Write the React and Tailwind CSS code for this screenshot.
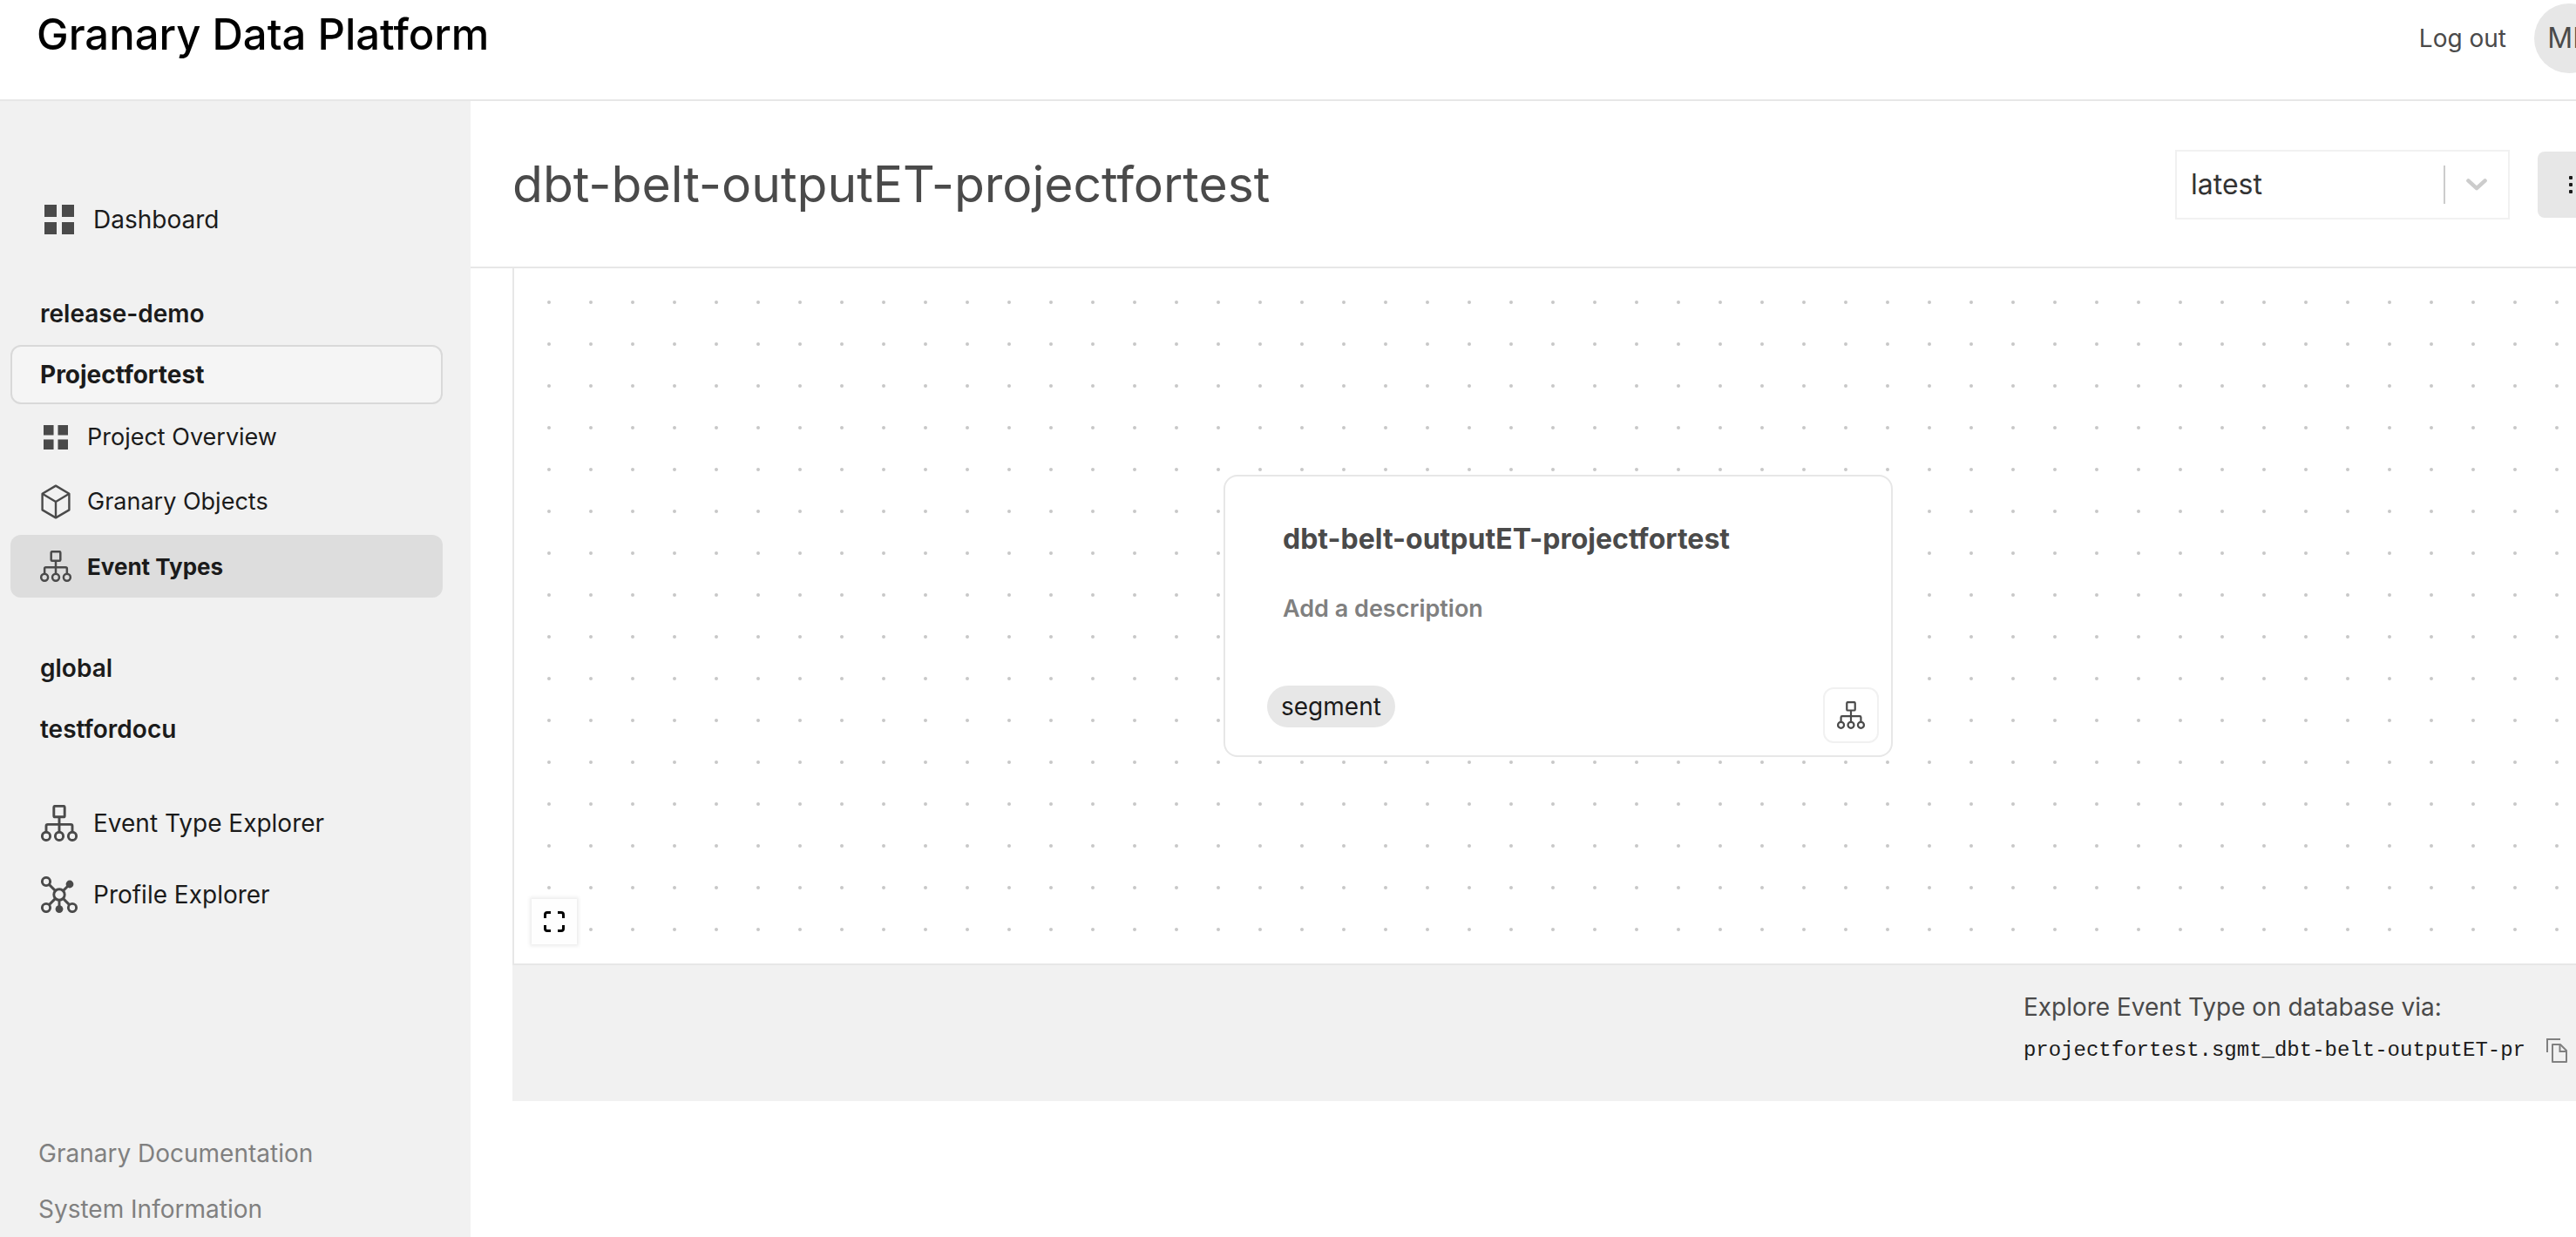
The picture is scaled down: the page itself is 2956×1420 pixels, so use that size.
import React from "react";

function GridIcon({ className }) {
  return (
    <svg viewBox="0 0 34 34" fill="currentColor" className={className} aria-hidden="true">
      <rect x="0" y="0" width="14" height="14" />
      <rect x="20" y="0" width="14" height="14" />
      <rect x="0" y="20" width="14" height="14" />
      <rect x="20" y="20" width="14" height="14" />
    </svg>
  );
}

function CubeIcon({ className }) {
  return (
    <svg viewBox="0 0 34 40" fill="none" stroke="currentColor" strokeWidth="2.4" strokeLinejoin="round" className={className} aria-hidden="true">
      <path d="M17 1.6 32.4 10.8V29.4L17 38.4 1.6 29.4V10.8Z" />
      <path d="M1.6 10.8 17 20 32.4 10.8M17 20V38.4" />
    </svg>
  );
}

function HierarchyIcon({ className }) {
  return (
    <svg viewBox="0 0 42 42" fill="none" stroke="currentColor" strokeWidth="2.9" className={className} aria-hidden="true">
      <rect x="14.8" y="1.4" width="12.4" height="12.4" rx="1.4" />
      <path d="M21 13.8V31M6 31V24.2Q6 22.4 7.8 22.4H34.2Q36 22.4 36 24.2V31" />
      <circle cx="6" cy="35.9" r="4.6" />
      <circle cx="21" cy="35.9" r="4.6" />
      <circle cx="36" cy="35.9" r="4.6" />
    </svg>
  );
}

function NetworkIcon({ className }) {
  return (
    <svg viewBox="0 0 42 42" fill="none" stroke="currentColor" strokeWidth="2.9" className={className} aria-hidden="true">
      <circle cx="6" cy="6" r="4.6" />
      <circle cx="6" cy="36" r="4.6" />
      <circle cx="36" cy="36" r="4.6" />
      <circle cx="21" cy="21" r="6.2" />
      <path d="M9.4 9.4 16.6 16.6M25.4 16.6 32 10M9.4 32.6 16.6 25.4M25.4 25.4 32.6 32.6M21 27.2V36" />
      <circle cx="33" cy="9" r="4.4" fill="currentColor" stroke="none" />
      <circle cx="21" cy="37.6" r="4.4" fill="currentColor" stroke="none" />
    </svg>
  );
}

function FitIcon({ className }) {
  return (
    <svg viewBox="0 0 24 24" fill="none" stroke="currentColor" strokeWidth="3" className={className} aria-hidden="true">
      <path d="M8 1.5H4Q1.5 1.5 1.5 4V8M16 1.5H20Q22.500 1.5 22.500 4V8M22.500 16V20Q22.500 22.500 20 22.500H16M8 22.500H4Q1.5 22.500 1.5 20V16" />
    </svg>
  );
}

function CopyIcon({ className }) {
  return (
    <svg viewBox="0 0 24 28" fill="none" stroke="currentColor" strokeWidth="2" className={className} aria-hidden="true">
      <path d="M1 16V1H16" />
      <path d="M7 7H16L23 14V27H7Z" strokeLinejoin="round" />
      <path d="M15.500 7V15H23" />
    </svg>
  );
}

function MainLink({ icon, children }) {
  return (
    <a href="#" className="flex h-[82px] items-center gap-[18px] pl-[47px] text-[28px]">
      <span className="flex w-[42px] justify-center text-[#4a4a4a]">{icon}</span>
      {children}
    </a>
  );
}

function SubLink({ icon, active, children }) {
  return (
    <a
      href="#"
      className={
        active
          ? "flex h-[72px] items-center gap-[18px] rounded-xl bg-[#dddddd] pl-[34px] text-[26px] font-bold"
          : "flex h-[72px] items-center gap-[18px] rounded-xl pl-[34px] text-[27px]"
      }
    >
      <span className="flex w-9 justify-center text-[#4a4a4a]">{icon}</span>
      {children}
    </a>
  );
}

function WorkspaceLink({ children }) {
  return (
    <a href="#" className="flex h-[70px] items-center pl-[46px] text-[28px] font-semibold">
      {children}
    </a>
  );
}

function Sidebar() {
  return (
    <aside className="flex w-[540px] shrink-0 flex-col bg-[#f1f1f1] pt-[95px] text-[#1b1b1b]">
      <nav className="flex flex-col">
        <MainLink icon={<GridIcon className="size-[34px]" />}>Dashboard</MainLink>
        <div className="mt-8 flex flex-col">
          <WorkspaceLink>release-demo</WorkspaceLink>
          <div className="mr-8 ml-3 flex flex-col gap-[2px] pt-px">
            <a href="#" className="flex h-[68px] items-center rounded-xl border-2 border-[#d9d9d9] bg-[#f5f5f5] pl-8 text-[28px] font-bold">
              Projectfortest
            </a>
            <SubLink icon={<GridIcon className="size-7" />}>Project Overview</SubLink>
            <SubLink icon={<CubeIcon className="h-10 w-[34px]" />}>Granary Objects</SubLink>
            <SubLink active icon={<HierarchyIcon className="size-9" />}>Event Types</SubLink>
          </div>
        </div>
        <div className="mt-[46px] flex flex-col">
          <WorkspaceLink>global</WorkspaceLink>
          <WorkspaceLink>testfordocu</WorkspaceLink>
        </div>
        <div className="mt-8 flex flex-col">
          <MainLink icon={<HierarchyIcon className="size-[42px]" />}>Event Type Explorer</MainLink>
          <MainLink icon={<NetworkIcon className="size-[42px]" />}>Profile Explorer</MainLink>
        </div>
      </nav>
      <div className="mt-auto flex flex-col pl-11 text-[28px] text-[#808080]">
        <a href="#" className="flex h-16 items-center">Granary Documentation</a>
        <a href="#" className="flex h-16 items-center">System Information</a>
      </div>
    </aside>
  );
}

function VersionSelect() {
  return (
    <div className="relative w-96">
      <select
        aria-label="Version"
        defaultValue="latest"
        className="h-20 w-full appearance-none border-2 border-[#f1f1f1] bg-white pl-4 text-[32px] text-[#333333]"
      >
        <option value="latest">latest</option>
      </select>
      <div className="pointer-events-none absolute inset-y-0 right-0 flex items-center gap-6 pr-[26px] text-[#cccccc]">
        <span className="h-11 w-[2px] bg-[#cccccc]" />
        <svg viewBox="0 0 24 14" fill="none" stroke="currentColor" strokeWidth="4.500" strokeLinecap="round" strokeLinejoin="round" className="h-[14px] w-6" aria-hidden="true">
          <path d="M2.400 2.400 12 11.200 21.600 2.400" />
        </svg>
      </div>
    </div>
  );
}

function EventTypeNode() {
  return (
    <article className="relative flex h-[324px] w-[768px] flex-col rounded-2xl border-2 border-[#e7e7e7] bg-white">
      <h2 className="mt-[52px] ml-[66px] text-[32px] leading-[40px] font-bold text-[#4a4a4a]">
        dbt-belt-outputET-projectfortest
      </h2>
      <button type="button" className="mt-10 ml-[66px] self-start text-[27px] leading-[40px] font-semibold text-[#808080]">
        Add a description
      </button>
      <div className="mt-auto flex items-start justify-between pr-[14px] pb-[14px] pl-12">
        <span className="flex h-12 items-center rounded-full bg-[#e7e7e7] px-4 text-[28px] text-[#1b1b1b]">segment</span>
        <button
          type="button"
          aria-label="Show hierarchy"
          className="mt-[2px] flex size-16 items-center justify-center rounded-xl border-2 border-[#f1f1f1] text-[#4a4a4a]"
        >
          <HierarchyIcon className="size-8" />
        </button>
      </div>
    </article>
  );
}

function Canvas() {
  return (
    <section className="relative flex h-[800px] items-center justify-center border-b-2 border-l-2 border-[#e7e7e7] pr-[2px]">
      <svg className="absolute inset-0 size-full" aria-hidden="true">
        <defs>
          <pattern id="dots" x="16" y="15" width="48" height="48" patternUnits="userSpaceOnUse">
            <circle cx="24" cy="24" r="2" fill="#c8c8c8" />
          </pattern>
        </defs>
        <rect width="100%" height="100%" fill="url(#dots)" />
      </svg>
      <EventTypeNode />
      <button
        type="button"
        aria-label="Fit view"
        className="absolute bottom-[22px] left-5 flex size-[52px] items-center justify-center bg-[#fefefe] text-black shadow-[0_0_4px_2px_rgba(0,0,0,0.08)]"
      >
        <FitIcon className="size-6" />
      </button>
    </section>
  );
}

export default function App() {
  return (
    <div className="min-h-screen overflow-x-hidden bg-white font-['Inter',sans-serif]">
      <div className="-mr-8 flex min-h-screen flex-col">
        <header className="flex h-[116px] items-start justify-between border-b-2 border-[#e7e7e7] pl-[42px]">
          <div className="text-[49px] leading-[80px] font-medium text-black">Granary Data Platform</div>
          <div className="flex items-center gap-8 pt-1 text-[#4a4a4a]">
            <a href="#" className="text-[28px]">Log out</a>
            <span className="flex size-20 items-center justify-center rounded-full bg-[#e7e7e7] text-[32px]">MP</span>
          </div>
        </header>
        <div className="flex flex-1">
          <Sidebar />
          <main className="flex min-w-0 flex-1 flex-col">
            <div className="flex h-48 items-center justify-between border-b-2 border-[#e7e7e7] pt-[2px] pl-12">
              <h1 className="text-[57px] leading-[64px] text-[#4a4a4a]">dbt-belt-outputET-projectfortest</h1>
              <div className="flex items-center gap-8">
                <VersionSelect />
                <button type="button" aria-label="More actions" className="flex size-[76px] flex-col items-center justify-center gap-1 rounded-lg bg-[#e7e7e7]">
                  <span className="size-1 rounded-[1px] bg-[#1b1b1b]" />
                  <span className="size-1 rounded-[1px] bg-[#1b1b1b]" />
                  <span className="size-1 rounded-[1px] bg-[#1b1b1b]" />
                </button>
              </div>
            </div>
            <div className="pl-12">
              <Canvas />
              <footer className="flex h-[156px] justify-end bg-[#f1f1f1] pt-7 pr-[42px]">
                <div className="flex flex-col">
                  <p className="text-[28px] leading-[40px] text-[#4a4a4a]">Explore Event Type on database via:</p>
                  <div className="mt-3 flex items-center gap-6 leading-[36px]">
                    <code className="font-['Liberation_Mono',monospace] text-[24px] text-[#1b1b1b]">projectfortest.sgmt_dbt-belt-outputET-pr</code>
                    <button type="button" aria-label="Copy" className="text-[#808080]">
                      <CopyIcon className="h-7 w-6" />
                    </button>
                  </div>
                </div>
              </footer>
            </div>
          </main>
        </div>
      </div>
    </div>
  );
}
